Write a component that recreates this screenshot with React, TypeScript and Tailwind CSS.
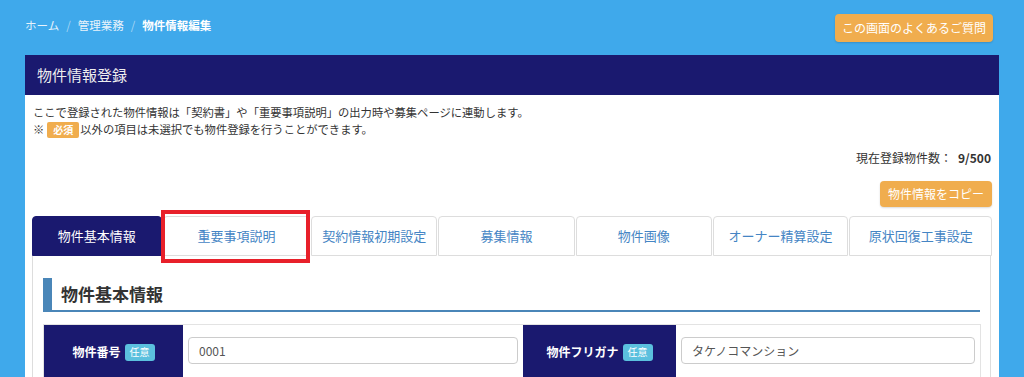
import React from "react";

const tabs = [
  { label: "物件基本情報", w: "w-[130px]", active: true },
  { label: "重要事項説明", w: "w-[148px]" },
  { label: "契約情報初期設定", w: "w-[126px]" },
  { label: "募集情報", w: "w-[137px]" },
  { label: "物件画像", w: "w-[136px]" },
  { label: "オーナー精算設定", w: "w-[136px]" },
  { label: "原状回復工事設定", w: "w-[143px]" },
];

function Badge({ text }: { text: string }) {
  return (
    <span className="ml-[4px] inline-flex h-[17px] items-center rounded-[3px] bg-[#5bc0de] px-[5px] text-[10px] font-normal leading-none text-white">
      {text}
    </span>
  );
}

export default function App() {
  return (
    <div
      className="h-[377px] w-[1024px] overflow-hidden bg-[#3fa9eb] text-[#333]"
      style={{ fontFamily: '"Noto Sans CJK JP", "Noto Sans", sans-serif' }}
    >
      <div className="flex h-[55px] items-start justify-between pl-[25px] pr-[31px]">
        <div className="mt-[17px] flex items-center text-[11.5px] text-white">
          <span className="text-[#e8f3fb]">ホーム</span>
          <span className="mx-[7px] text-[#a9d6f3]">/</span>
          <span className="text-[#e8f3fb]">管理業務</span>
          <span className="mx-[7px] text-[#a9d6f3]">/</span>
          <span className="font-bold">物件情報編集</span>
        </div>
        <button className="mt-[14px] flex h-[28px] w-[158px] items-center justify-center rounded-[4px] bg-[#f0ad4e] text-[12px] text-white shadow-[0_1px_2px_rgba(0,0,0,0.15)]">
          この画面のよくあるご質問
        </button>
      </div>

      <div className="mx-[25px]">
        <div className="flex h-[40px] items-center bg-[#1a196f] px-[12px] text-[15px] text-[#eeeeee]">
          物件情報登録
        </div>
        <div className="h-[300px] bg-white px-[7px] pt-[9px]">
          <div className="pl-[1px] text-[11.3px] leading-[17px]">
            <div>ここで登録された物件情報は「契約書」や「重要事項説明」の出力時や募集ページに連動します。</div>
            <div className="flex items-center">
              <span>※</span>
              <span className="ml-[3px] mr-[1px] inline-flex h-[16px] items-center rounded-[2px] bg-[#f0ad4e] px-[6px] text-[10px] font-bold leading-none text-white">
                必須
              </span>
              <span>以外の項目は未選択でも物件登録を行うことができます。</span>
            </div>
          </div>
          <div className="mt-[11px] flex justify-end pr-[1px] text-[12px] leading-[18px]">
            <span>現在登録物件数：</span>
            <span className="ml-[6px] font-bold">9/500</span>
          </div>
          <div className="mt-[14px] flex justify-end pr-[0px]">
            <button className="flex h-[26px] w-[112px] items-center justify-center rounded-[4px] bg-[#f0ad4e] text-[12px] text-white shadow-[0_1px_2px_rgba(0,0,0,0.15)]">
              物件情報をコピー
            </button>
          </div>

          <div className="relative mt-[9px] flex gap-[1px]">
            {tabs.map((t) => (
              <div
                key={t.label}
                className={`${t.w} flex h-[40px] items-center justify-center rounded-t-[4px] border text-[13px] ${
                  t.active
                    ? "border-[#1a196f] bg-[#1a196f] text-white"
                    : "border-[#dddddd] bg-white text-[#4585c4]"
                }`}
              >
                {t.label}
              </div>
            ))}
            <div className="absolute left-[129px] top-[-6px] h-[53px] w-[149px] border-[4px] border-[#e8202a]" />
          </div>

          <div className="h-[200px] w-[959px] border-x border-[#dddddd] px-[10px] pt-[22px]">
            <div className="flex h-[34px] items-center border-b-[2px] border-l-[9px] border-[#4a86b8] pl-[9px] text-[17px] font-bold text-[#333]">
              物件基本情報
            </div>
            <div className="mt-[12px] flex h-[60px] w-[938px] border border-[#e3e3e3]">
              <div className="flex w-[139px] items-center justify-center bg-[#1a196f] pb-[4px] text-[12px] font-bold text-white">
                物件番号
                <Badge text="任意" />
              </div>
              <div className="w-[340px] px-[5px] pt-[12px]">
                <div className="flex h-[27px] items-center rounded-[4px] border border-[#cccccc] px-[10px] text-[12px] text-[#555]">
                  0001
                </div>
              </div>
              <div className="flex w-[153px] items-center justify-center bg-[#1a196f] pb-[4px] text-[12px] font-bold text-white">
                物件フリガナ
                <Badge text="任意" />
              </div>
              <div className="flex-1 px-[5px] pt-[12px]">
                <div className="flex h-[27px] items-center rounded-[4px] border border-[#cccccc] px-[10px] text-[12px] text-[#555]">
                  タケノコマンション
                </div>
              </div>
            </div>
          </div>
        </div>
      </div>
    </div>
  );
}
